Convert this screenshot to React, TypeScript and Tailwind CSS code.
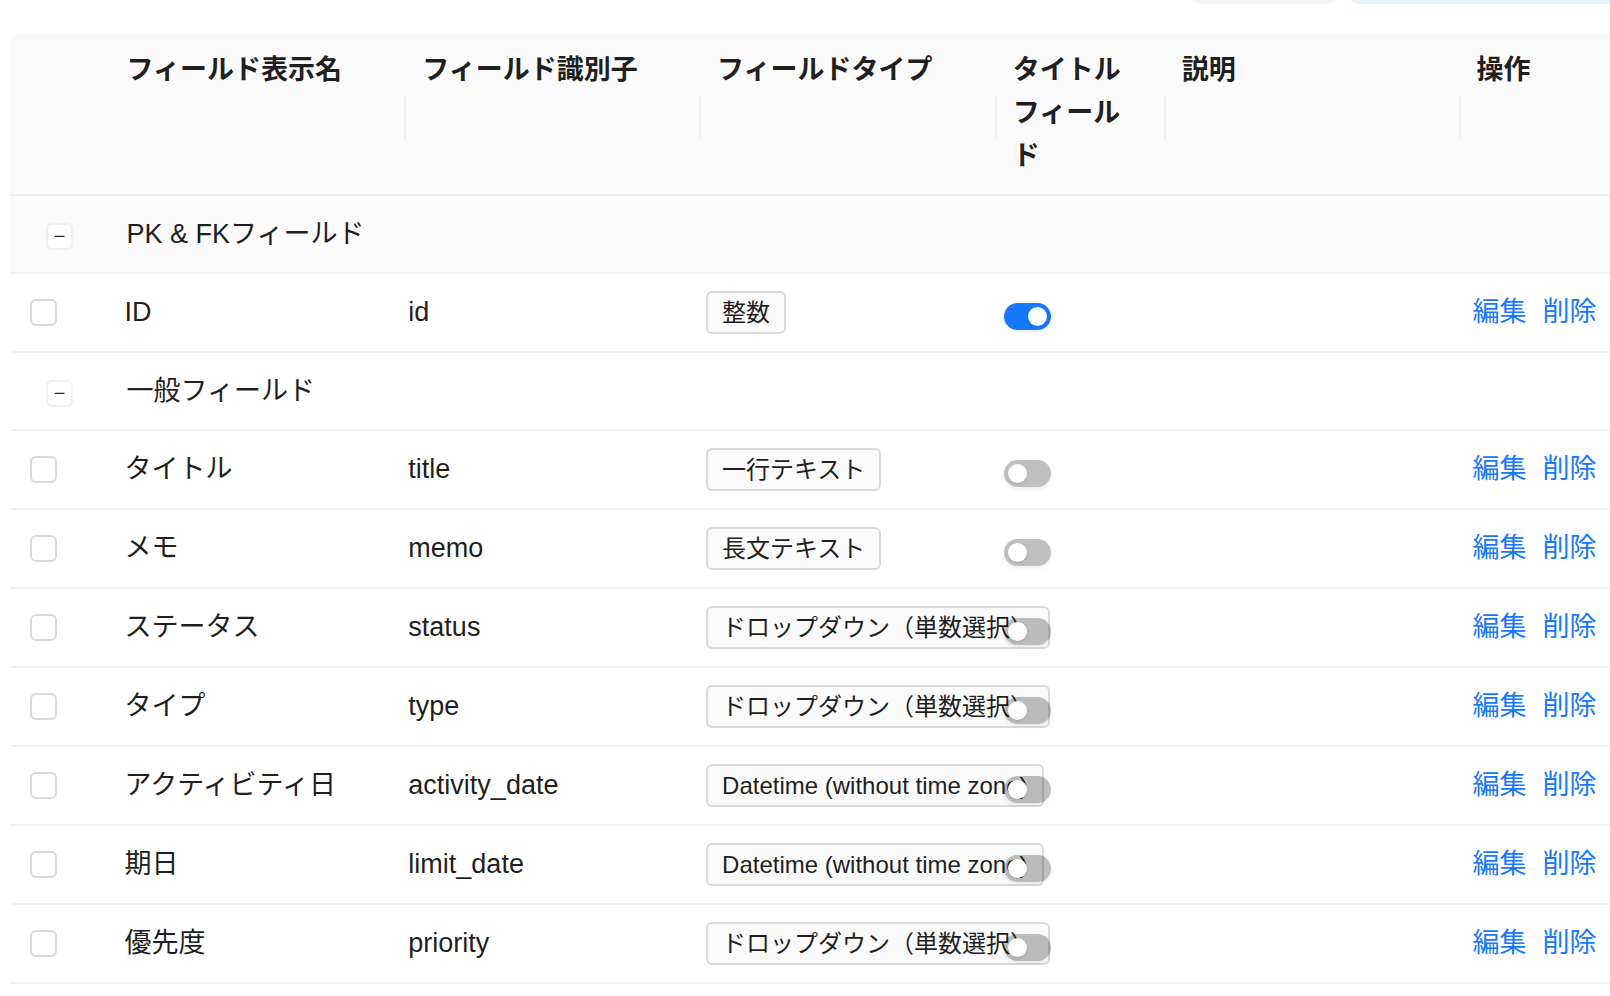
import React from "react";

type Row = { name: string; key: string; type: string; title?: boolean };

const groups: { label: string; bg: string; rows: Row[] }[] = [
  { label: "PK & FKフィールド", bg: "bg-[#fafafa]", rows: [{ name: "ID", key: "id", type: "整数", title: true }] },
  {
    label: "一般フィールド",
    bg: "bg-white",
    rows: [
      { name: "タイトル", key: "title", type: "一行テキスト" },
      { name: "メモ", key: "memo", type: "長文テキスト" },
      { name: "ステータス", key: "status", type: "ドロップダウン（単数選択）" },
      { name: "タイプ", key: "type", type: "ドロップダウン（単数選択）" },
      { name: "アクティビティ日", key: "activity_date", type: "Datetime (without time zone)" },
      { name: "期日", key: "limit_date", type: "Datetime (without time zone)" },
      { name: "優先度", key: "priority", type: "ドロップダウン（単数選択）" },
    ],
  },
];

const headers = ["フィールド表示名", "フィールド識別子", "フィールドタイプ", "タイトルフィールド", "説明", "操作"];
const widths = ["w-[294px]", "w-[293px]", "w-[294px]", "w-[168px]", "w-[293px]", "w-[220px]"];

function Toggle({ on }: { on?: boolean }) {
  return (
    <span
      className={`relative z-10 inline-block w-[47px] h-[27px] rounded-full align-middle shadow-[0_2px_4px_rgba(0,0,0,0.08)] ${
        on ? "bg-[#1677ff]" : "bg-[rgba(0,0,0,0.25)]"
      }`}
    >
      <span
        className={`absolute top-[4px] w-[19px] h-[19px] rounded-full bg-white shadow ${on ? "left-[24px]" : "left-[4px]"}`}
      />
    </span>
  );
}

export default function App() {
  const font = { fontFamily: '"Liberation Sans", "Noto Sans CJK JP", sans-serif' };
  return (
    <div className="w-[1610px] h-[996px] bg-white overflow-hidden relative" style={font}>
      <div className="absolute top-[-20px] left-[1192px] w-[144px] h-[24px] rounded-lg bg-[#f5f5f5]" />
      <div className="absolute top-[-20px] left-[1350px] w-[320px] h-[24px] rounded-lg bg-[#e6f4ff]" />
      <div className="pt-[33px] pl-[10px]">
        <table className="table-fixed border-collapse w-[1670px] text-[#1f1f1f]">
          <thead>
            <tr className="bg-[#fafafa] border-b-2 border-[#f0f0f0]">
              <th className="w-[98px] rounded-tl-xl" />
              {headers.map((h, i) => (
                <th
                  key={h}
                  className={`${widths[i]} relative text-left align-top font-bold text-[27px] leading-[43px] pt-[16px] pb-[16px] pl-[18px] ${
                    i === 3 ? "pr-[30px]" : "pr-[14px]"
                  }`}
                >
                  {i > 0 && <span className="absolute left-0 top-[62px] h-[45px] w-[2px] bg-[#f0f0f0]" />}
                  {h}
                </th>
              ))}
            </tr>
          </thead>
          <tbody>
            {groups.map((g) => (
              <React.Fragment key={g.label}>
                <tr className={`${g.bg} border-b-2 border-[#f0f0f0] h-[78px]`}>
                  <td className="pl-[36px] pt-[4px]">
                    <span className="flex items-center justify-center w-[27px] h-[27px] rounded-md border-2 border-[#f0f0f0] bg-white text-[20px] leading-none">
                      −
                    </span>
                  </td>
                  <td colSpan={6} className="pl-[18px] text-[27px]">
                    {g.label}
                  </td>
                </tr>
                {g.rows.map((r) => (
                  <tr key={r.key} className="border-b-2 border-[#f0f0f0] h-[79px] text-[27px]">
                    <td className="pl-[20px]">
                      <span className="block w-[27px] h-[27px] rounded-md border-2 border-[#d9d9d9] bg-white" />
                    </td>
                    <td className="pl-[16px]">{r.name}</td>
                    <td className="pl-[4px]">{r.key}</td>
                    <td className="pl-[7px] whitespace-nowrap overflow-visible">
                      <span className="inline-block border-2 border-[#d9d9d9] bg-[#fafafa] rounded-md px-[14px] h-[43px] leading-[39px] text-[24px]">
                        {r.type}
                      </span>
                    </td>
                    <td className="pl-[9px] pt-[4px]">
                      <Toggle on={r.title} />
                    </td>
                    <td />
                    <td className="pl-[14px] text-[#1677ff] whitespace-nowrap">
                      編集<span className="ml-[16px]">削除</span>
                    </td>
                  </tr>
                ))}
              </React.Fragment>
            ))}
          </tbody>
        </table>
      </div>
    </div>
  );
}
